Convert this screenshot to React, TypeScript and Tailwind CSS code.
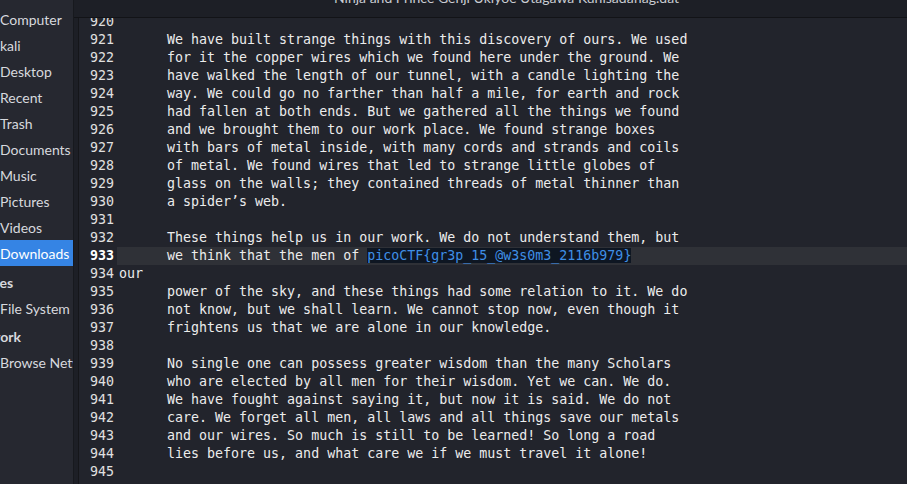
const lines: { n: number; text: string }[] = [
  { n: 920, text: "" },
  { n: 921, text: "      We have built strange things with this discovery of ours. We used" },
  { n: 922, text: "      for it the copper wires which we found here under the ground. We" },
  { n: 923, text: "      have walked the length of our tunnel, with a candle lighting the" },
  { n: 924, text: "      way. We could go no farther than half a mile, for earth and rock" },
  { n: 925, text: "      had fallen at both ends. But we gathered all the things we found" },
  { n: 926, text: "      and we brought them to our work place. We found strange boxes" },
  { n: 927, text: "      with bars of metal inside, with many cords and strands and coils" },
  { n: 928, text: "      of metal. We found wires that led to strange little globes of" },
  { n: 929, text: "      glass on the walls; they contained threads of metal thinner than" },
  { n: 930, text: "      a spider\u2019s web." },
  { n: 931, text: "" },
  { n: 932, text: "      These things help us in our work. We do not understand them, but" },
  { n: 933, text: "      we think that the men of " },
  { n: 934, text: "our" },
  { n: 935, text: "      power of the sky, and these things had some relation to it. We do" },
  { n: 936, text: "      not know, but we shall learn. We cannot stop now, even though it" },
  { n: 937, text: "      frightens us that we are alone in our knowledge." },
  { n: 938, text: "" },
  { n: 939, text: "      No single one can possess greater wisdom than the many Scholars" },
  { n: 940, text: "      who are elected by all men for their wisdom. Yet we can. We do." },
  { n: 941, text: "      We have fought against saying it, but now it is said. We do not" },
  { n: 942, text: "      care. We forget all men, all laws and all things save our metals" },
  { n: 943, text: "      and our wires. So much is still to be learned! So long a road" },
  { n: 944, text: "      lies before us, and what care we if we must travel it alone!" },
  { n: 945, text: "" },
  { n: 946, text: "" },
];

const places = ["Computer", "kali", "Desktop", "Recent", "Trash", "Documents", "Music", "Pictures", "Videos"];

const mono = "font-['DejaVu_Sans_Mono',monospace] text-[13.3px]";

export default function App() {
  return (
    <div className="flex h-[484px] w-[907px] overflow-hidden bg-[#1d1f26] font-['Lato',sans-serif]">
      {/* Sidebar (scrolled so the left edge is cut off) */}
      <aside className="flex w-[74px] shrink-0 flex-col overflow-hidden border-r border-[#17191e] bg-[#262830] pt-[6px] text-[14px] text-[#d7d9de]">
        {places.map((p) => (
          <div key={p} className="flex h-[26px] items-center whitespace-nowrap">
            {p}
          </div>
        ))}
        <div className="flex h-[26px] items-center whitespace-nowrap bg-[#3584e4] text-white">Downloads</div>
        <div className="mt-[3px] ml-[-36px] flex h-[26px] items-center whitespace-nowrap font-bold">Devices</div>
        <div className="flex h-[26px] items-center whitespace-nowrap">File System</div>
        <div className="mt-[2px] ml-[-34px] flex h-[26px] items-center whitespace-nowrap font-bold">Network</div>
        <div className="flex h-[26px] items-center whitespace-nowrap">Browse Network</div>
      </aside>

      <main className="flex min-w-0 flex-1 flex-col">
        {/* title bar, mostly scrolled off the top */}
        <div className="h-[18px] shrink-0 overflow-hidden border-b border-[#121317] pl-[32px] text-center text-[14px] text-[#c9ccd2]">
          <div className="mt-[-13px] whitespace-nowrap">Ninja and Prince Genji Ukiyoe Utagawa Kunisadaflag.dat</div>
        </div>

        <div className="ml-[4px] flex-1 overflow-hidden border-l border-[#15161a] bg-[#22242c]">
          <div className={`mt-[-5px] ${mono} leading-[18px] text-[#ececec]`}>
            {lines.map((l) => (
              <div key={l.n} className="flex h-[18px]">
                <div className={`w-[38px] shrink-0 pr-[3px] text-right text-[#e0e0e0] ${l.n === 933 ? "font-bold text-white" : ""}`}>
                  {l.n}
                </div>
                <div className={`flex-1 whitespace-pre pl-[2px] ${l.n === 933 ? "bg-[#2f3137]" : ""}`}>
                  {l.text}
                  {l.n === 933 && (
                    <span className="bg-[#0e1622] text-[#3f8fe6]">picoCTF{"{"}gr3p_15_@w3s0m3_2116b979{"}"}</span>
                  )}
                </div>
              </div>
            ))}
          </div>
        </div>
      </main>
    </div>
  );
}
